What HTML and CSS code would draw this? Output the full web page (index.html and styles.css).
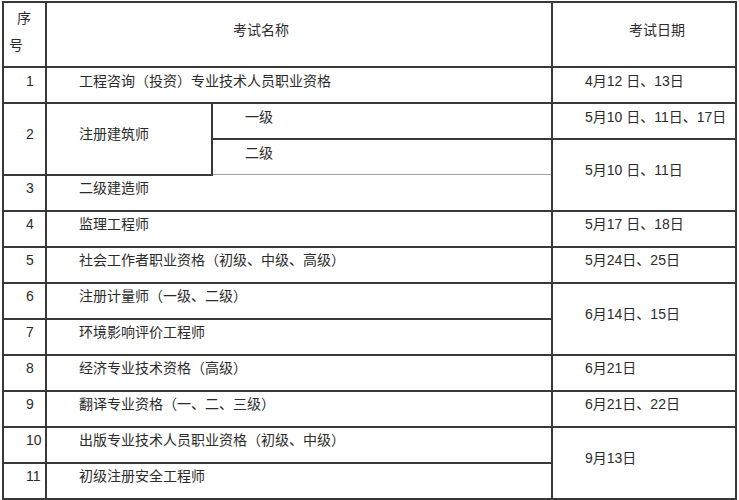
FILE: index.html
```html
<!DOCTYPE html>
<html lang="zh-CN">
<head>
<meta charset="utf-8">
<title>考试日期</title>
<link rel="stylesheet" href="styles.css">
</head>
<body>
<table class="exam">
  <colgroup>
    <col class="c-seq">
    <col class="c-name-a">
    <col class="c-name-b">
    <col class="c-date">
  </colgroup>
  <tr class="head">
    <td class="seq-head"><span class="l1">序</span><br><span class="l2">号</span></td>
    <td class="name-head" colspan="2">考试名称</td>
    <td class="date-head">考试日期</td>
  </tr>
  <tr>
    <td class="seq">1</td>
    <td class="name" colspan="2">工程咨询（投资）专业技术人员职业资格</td>
    <td class="date">4月12 日、13日</td>
  </tr>
  <tr>
    <td class="seq" rowspan="2">2</td>
    <td class="name" rowspan="2">注册建筑师</td>
    <td class="name">一级</td>
    <td class="date">5月10 日、11日、17日</td>
  </tr>
  <tr>
    <td class="name light-b">二级</td>
    <td class="date" rowspan="2">5月10 日、11日</td>
  </tr>
  <tr>
    <td class="seq">3</td>
    <td class="name light-t" colspan="2">二级建造师</td>
  </tr>
  <tr>
    <td class="seq">4</td>
    <td class="name" colspan="2">监理工程师</td>
    <td class="date">5月17 日、18日</td>
  </tr>
  <tr>
    <td class="seq">5</td>
    <td class="name" colspan="2">社会工作者职业资格（初级、中级、高级）</td>
    <td class="date">5月24日、25日</td>
  </tr>
  <tr>
    <td class="seq">6</td>
    <td class="name" colspan="2">注册计量师（一级、二级）</td>
    <td class="date" rowspan="2">6月14日、15日</td>
  </tr>
  <tr>
    <td class="seq">7</td>
    <td class="name" colspan="2">环境影响评价工程师</td>
  </tr>
  <tr>
    <td class="seq">8</td>
    <td class="name" colspan="2">经济专业技术资格（高级）</td>
    <td class="date">6月21日</td>
  </tr>
  <tr>
    <td class="seq">9</td>
    <td class="name" colspan="2">翻译专业资格（一、二、三级）</td>
    <td class="date">6月21日、22日</td>
  </tr>
  <tr>
    <td class="seq">10</td>
    <td class="name" colspan="2">出版专业技术人员职业资格（初级、中级）</td>
    <td class="date" rowspan="2">9月13日</td>
  </tr>
  <tr>
    <td class="seq">11</td>
    <td class="name" colspan="2">初级注册安全工程师</td>
  </tr>
  <tr class="tail">
    <td class="seq"></td>
    <td class="name" colspan="2"></td>
    <td class="date"></td>
  </tr>
</table>
</body>
</html>
```
FILE: styles.css
```css
html, body {
  margin: 0;
  padding: 0;
  background: #ffffff;
}
body {
  padding: 1px 0 0 2px;
  font-family: "Liberation Sans", "Noto Sans CJK SC", sans-serif;
  font-size: 14px;
  color: #2b2b2b;
}
.exam {
  border-collapse: collapse;
  table-layout: fixed;
  width: 733px;
}
.c-seq { width: 43px; }
.c-name-a { width: 166px; }
.c-name-b { width: 340px; }
.c-date { width: 184px; }

.exam td {
  border: 2px solid #383838;
  padding: 0 0 9px 0;
  height: 25px;
  vertical-align: middle;
  line-height: 20px;
  white-space: nowrap;
  overflow: hidden;
}
.exam tr.head td {
  height: 54px;
}
.exam td.seq-head {
  padding: 0 0 6px 5px;
  line-height: 27px;
}
.seq-head .l1 { padding-left: 8px; }
.exam td.name-head {
  padding-left: 186px;
}
.exam td.date-head {
  padding-left: 76px;
}
.exam td.seq {
  padding-left: 22px;
}
.exam td.name {
  padding-left: 32px;
}
.exam td.date {
  padding-left: 32px;
}
.exam td.light-b { border-bottom: 1px solid #a0a0a0; }
.exam td.light-t { border-top: 1px solid #a0a0a0; }
```
